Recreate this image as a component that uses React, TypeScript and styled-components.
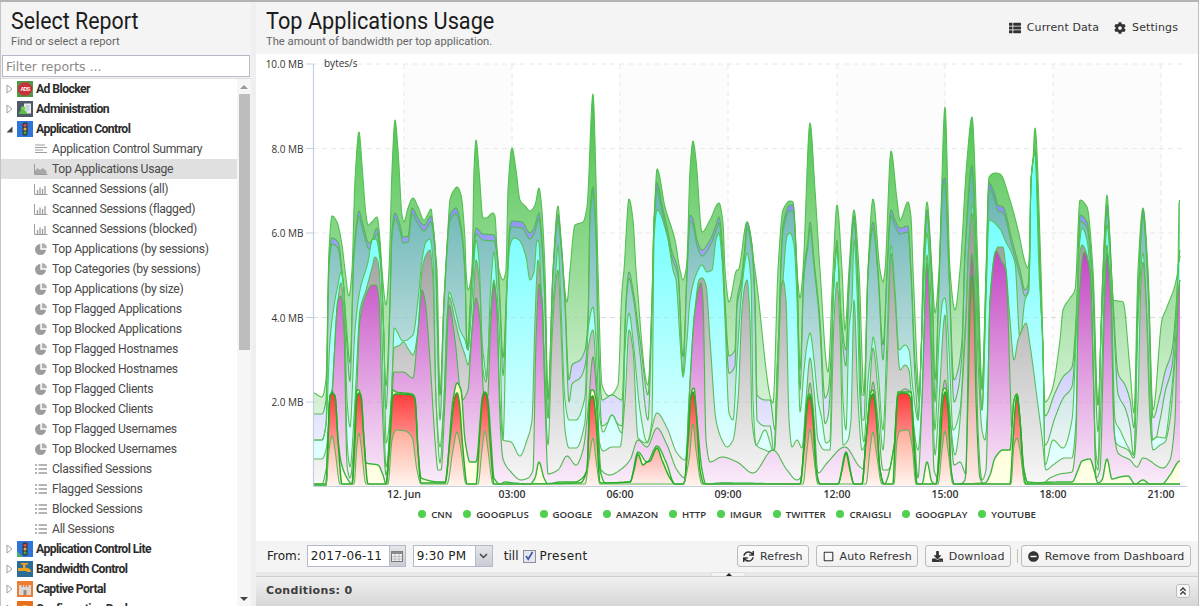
import React from "react";
import styled, { createGlobalStyle } from "styled-components";
import { FaThList, FaCog, FaSync, FaRegSquare, FaDownload, FaMinusCircle, FaAngleDoubleUp } from "react-icons/fa";

const Global = createGlobalStyle`
  html, body { margin: 0; padding: 0; height: 100%; overflow: hidden; background: #fff; }
  #root { height: 100%; }
  * { box-sizing: border-box; }
`;

const BASE = 486;
const LISTS: Record<string, string> = {
  A: "313,485 326,485 329,450 332,436 335,450 340,484 354,484 357,445 359,433 361,445 366,484 388,484 392,440 396,430 405,431 412,437 417,470 421,484 447,484 453,450 457,432 461,450 466,484 478,484 482,450 485,431 488,450 493,484 585,484 589,460 593,438 596,460 600,484 683,484 689,460 693,424 696,450 702,484 803,484 807,450 810,429 813,450 818,484 866,484 870,450 873,432 876,450 882,484 894,484 897,440 900,431 908,430 912,445 916,484 938,484 942,450 945,431 948,450 953,484 1011,484 1014,445 1017,438 1020,450 1025,484 1180,484",
  R: "313,485 326,485 328,440 330,396 332,393 335,396 338,440 342,484 352,484 355,440 357,396 359,393 361,396 364,440 368,484 386,484 390,440 393,396 396,394 412,395 415,400 418,450 421,483 445,483 450,440 455,396 457,393 459,400 463,450 467,484 476,484 480,430 483,396 485,393 487,396 490,440 494,484 503,484 580,483 587,470 590,400 593,396 596,420 600,483 630,482 634,470 638,454 643,465 647,462 650,461 657,448 662,460 670,478 675,484 684,484 688,440 691,396 693,392 696,410 700,470 704,484 800,484 804,450 808,400 810,396 813,420 816,470 820,484 838,484 842,470 846,453 850,470 854,484 862,484 866,440 871,397 873,394 876,415 880,470 884,484 893,484 895,440 898,395 902,393 908,394 911,400 914,450 917,484 936,484 940,450 943,400 945,392 948,410 951,470 954,484 1010,484 1013,440 1016,400 1017,396 1020,420 1023,470 1026,484 1180,484",
  Y: "313,484 326,484 332,391 338,440 341,462 347,478 352,484 357,390 359,390 361,400 366,463 378,465 383,475 386,484 393,390 396,392 412,394 415,398 418,450 421,478 440,482 445,482 453,400 457,383 461,390 465,440 470,462 476,462 483,394 485,392 488,400 491,440 494,478 500,484 505,482 513,483 530,484 535,478 539,462 544,478 548,484 560,482 575,482 580,480 587,470 591,390 593,390 596,400 600,470 606,484 630,482 638,452 647,462 657,446 666,462 675,484 684,484 689,430 692,390 694,388 697,420 702,470 706,484 722,483 800,484 808,396 810,394 813,410 816,470 820,484 838,484 846,452 854,484 862,484 871,392 873,390 876,410 880,470 884,484 895,440 898,392 911,392 914,440 917,484 922,484 927,462 932,482 936,484 943,390 945,388 948,400 951,470 954,484 985,483 990,475 995,458 1003,450 1010,450 1014,400 1017,394 1020,420 1024,470 1028,483 1060,482 1072,482 1078,470 1082,461 1090,459 1094,470 1098,483 1102,480 1107,459 1112,479 1120,477 1128,476 1135,484 1143,480 1150,484 1162,484 1170,475 1180,461",
  M: "313,484 322,484 326,470 330,440 334,360 338,300 341,296 344,330 347,465 350,478 355,430 360,320 366,295 372,285 376,285 379,300 382,400 386,475 390,440 394,372 403,372 413,378 418,330 422,290 425,300 430,360 435,440 438,470 441,470 445,400 449,305 455,340 462,400 468,390 472,330 476,298 480,320 484,400 487,405 491,320 494,283 497,310 500,420 503,459 511,472 521,480 528,478 533,470 536,340 539,284 542,300 545,400 548,474 558,470 567,456 576,465 583,450 588,410 593,357 597,400 601,470 610,475 620,470 630,460 638,440 647,447 657,428 667,445 677,470 685,478 689,400 695,310 701,283 703,300 706,440 710,462 722,457 737,462 753,473 773,450 787,470 797,480 802,475 806,420 810,383 814,420 818,473 827,463 845,447 860,467 866,470 869,420 873,382 878,420 883,470 887,470 893,462 897,400 900,392 905,389 910,392 914,430 918,478 922,400 927,263 931,350 934,470 938,478 940,420 945,380 950,420 954,465 960,462 966,474 969,300 972,254 975,300 978,430 982,480 986,470 990,300 996,251 1002,262 1006,270 1010,380 1014,480 1030,482 1043,483 1050,478 1060,474 1072,472 1076,440 1078,320 1084,252 1090,270 1094,400 1096,478 1100,470 1105,290 1107,253 1111,300 1114,430 1118,453 1130,460 1137,467 1143,458 1163,468 1170,460 1175,420 1178,300 1180,280",
  G: "313,459 322,459 326,450 331,400 335,360 338,300 341,283 344,310 347,440 350,467 355,400 360,310 366,290 372,268 375,257 378,262 381,300 384,420 386,467 390,430 394,348 400,345 403,342 409,350 413,355 418,330 422,270 426,255 430,250 433,280 436,400 440,463 444,400 447,320 449,297 455,320 460,340 465,355 468,365 472,330 476,260 480,290 483,370 486,382 490,320 494,280 497,320 500,400 503,440 511,442 520,456 527,440 532,420 535,320 538,260 541,290 545,390 548,445 552,340 556,280 558,270 561,330 565,430 569,448 576,448 585,422 588,350 593,330 596,370 599,440 603,451 612,447 620,447 625,400 629,330 633,350 638,438 647,443 657,413 667,428 677,453 685,460 690,400 695,310 699,280 702,278 706,285 710,340 716,420 722,440 727,447 733,440 738,400 742,310 745,285 747,280 750,320 752,420 756,445 765,450 774,453 778,380 781,290 783,280 786,300 789,420 792,447 797,440 802,448 806,400 810,358 814,390 818,440 825,450 830,450 834,320 837,282 840,330 843,445 848,440 851,420 854,300 858,400 862,450 866,440 869,400 873,348 878,390 883,450 887,370 891,253 895,300 900,370 905,365 909,370 913,420 918,450 922,400 927,255 931,330 935,455 939,400 945,315 949,400 955,455 958,440 965,340 969,240 972,213 975,260 978,360 982,430 985,440 988,400 990,300 995,255 998,247 1003,247 1006,270 1010,320 1014,360 1018,340 1022,330 1026,323 1030,345 1036,390 1042,437 1046,470 1053,465 1065,458 1072,458 1076,420 1079,260 1082,245 1087,255 1091,330 1095,460 1098,470 1101,400 1104,300 1107,245 1111,340 1115,440 1118,445 1128,450 1134,458 1138,400 1141,280 1143,262 1146,300 1150,420 1153,450 1160,445 1165,442 1170,420 1175,360 1180,300",
  C: "313,440 322,440 326,425 330,340 335,300 338,285 341,272 344,290 347,400 350,427 355,330 360,290 368,262 372,240 376,239 380,260 384,340 386,443 392,390 394,328 403,341 413,335 418,300 422,260 426,242 430,239 433,260 436,400 440,447 444,400 447,330 449,292 455,310 460,330 465,340 468,350 472,300 476,240 479,260 482,340 484,360 487,380 490,300 494,252 497,290 500,350 503,440 507,290 510,245 514,238 519,240 526,257 530,280 534,272 537,240 539,243 541,290 544,350 548,418 552,320 556,270 558,245 560,280 565,400 569,420 576,420 585,397 588,330 593,307 596,340 599,410 603,432 612,415 622,433 625,350 629,313 633,340 640,410 647,442 652,420 654,240 657,210 667,235 673,270 676,280 680,340 683,377 687,340 690,300 696,275 702,265 707,272 712,270 716,240 719,233 722,260 725,320 729,413 733,420 737,360 741,300 745,262 747,253 751,280 753,400 756,445 765,430 774,452 778,350 783,280 787,236 790,233 794,245 797,300 800,412 804,370 807,345 810,333 814,360 818,400 822,420 826,443 830,440 833,300 837,250 840,300 843,400 846,430 849,330 852,300 854,240 857,290 860,400 864,442 868,380 872,345 873,337 878,370 883,430 887,340 891,245 895,290 899,350 905,345 909,350 913,390 918,420 922,330 927,233 931,300 935,430 939,340 943,300 945,298 949,350 953,430 960,410 965,330 969,280 972,203 975,240 978,330 982,410 986,300 989,220 1000,229 1005,240 1015,263 1020,340 1025,300 1029,290 1031,180 1035,153 1039,270 1043,350 1045,465 1053,440 1063,448 1072,420 1076,340 1079,250 1082,228 1087,240 1091,290 1095,440 1098,465 1101,330 1103,300 1107,225 1111,280 1115,420 1120,430 1127,445 1134,455 1138,320 1143,253 1147,320 1152,440 1157,437 1165,438 1170,405 1175,350 1179,260",
  P: "313,414 322,414 326,400 329,260 332,238 338,242 342,270 346,320 350,363 354,250 359,211 363,225 369,243 372,240 377,228 381,260 386,386 390,300 392,230 395,213 400,225 403,237 408,236 412,208 418,218 424,225 431,216 435,245 440,395 444,300 450,215 456,208 461,225 465,270 467,348 472,270 476,228 483,234 494,235 497,250 500,300 503,358 507,280 510,225 512,221 522,222 530,233 534,228 539,213 542,240 545,300 548,400 553,270 558,215 561,240 565,300 569,380 572,365 580,360 585,350 588,320 590,210 593,187 596,230 598,330 602,400 612,395 622,400 626,300 629,272 633,290 640,340 648,395 652,300 654,220 657,183 662,205 668,232 672,252 678,270 683,357 687,270 690,215 693,219 697,240 702,250 710,240 716,225 719,217 722,240 725,300 729,356 735,350 737,300 741,280 745,245 747,222 752,245 755,300 757,395 765,400 770,400 775,430 778,350 783,225 790,205 793,205 797,270 800,370 804,270 808,240 810,222 814,260 820,320 825,398 828,392 832,340 835,260 837,240 840,300 846,350 849,280 854,216 858,280 862,395 864,395 868,270 872,225 873,222 878,270 883,345 887,270 890,215 891,210 895,220 900,228 908,226 911,270 915,360 920,405 923,280 927,210 932,280 935,380 939,280 943,180 945,178 949,270 954,380 958,370 962,340 965,250 972,165 977,270 982,390 986,280 989,183 995,195 998,205 1003,207 1012,240 1020,270 1025,290 1028,285 1032,200 1035,150 1040,270 1045,416 1055,393 1063,377 1072,367 1077,300 1080,215 1087,222 1092,270 1098,405 1103,270 1107,205 1113,300 1118,373 1125,385 1130,400 1134,428 1138,300 1143,210 1148,280 1153,418 1160,395 1165,372 1172,350 1178,280 1180,250",
  W: "313,393 322,397 326,380 329,250 332,216 337,222 342,245 345,270 349,296 352,270 355,180 359,132 362,165 366,215 368,225 372,222 377,217 380,240 382,270 386,305 389,270 392,170 395,120 398,150 402,215 404,222 408,208 413,198 418,207 424,220 428,214 431,209 434,240 437,270 440,395 444,300 446,270 450,200 454,190 457,187 461,195 465,240 466,270 468,290 472,270 474,170 476,140 479,170 483,218 486,218 493,213 495,216 497,250 499,270 503,280 506,270 508,190 512,148 516,170 520,200 526,207 530,211 535,205 539,188 541,200 545,270 548,398 553,270 558,206 560,225 563,270 567,302 570,270 575,225 583,222 587,207 593,94 596,180 598,270 602,385 609,396 618,385 622,290 624,270 629,199 633,220 636,270 648,385 653,270 655,200 657,169 665,207 675,240 680,270 683,280 686,270 687,260 690,170 693,141 696,160 702,232 710,220 719,203 723,223 725,270 729,302 737,270 738,270 747,222 755,270 773,403 778,270 783,210 790,201 793,202 797,270 800,298 803,270 810,123 815,190 820,270 828,372 833,270 837,205 842,270 845,330 849,270 854,210 859,270 864,393 868,270 873,199 880,270 883,282 885,270 891,151 897,200 900,220 908,202 911,217 913,270 920,400 923,270 927,202 932,270 935,313 939,270 945,107 950,270 955,310 960,270 967,160 972,117 978,270 982,385 986,270 989,177 995,173 1000,174 1010,200 1018,230 1026,265 1028,268 1031,220 1035,128 1041,270 1045,402 1052,390 1060,340 1063,310 1070,298 1075,290 1080,200 1087,207 1093,270 1098,405 1103,270 1107,195 1113,300 1123,302 1130,370 1134,413 1138,270 1143,208 1148,270 1153,410 1162,320 1167,307 1178,270 1179,203 1180,200",
  Z: "960,484 965,480 968,400 970,310 972,275 974,310 976,400 980,478 984,484",
};

function interpolator(src: string) {
  const pts = src.split(" ").map((p) => p.split(",").map(Number));
  const n = pts.length;
  const m = pts.map((_, i) => {
    if (i === 0 || i === n - 1) return 0;
    const d0 = (pts[i][1] - pts[i - 1][1]) / (pts[i][0] - pts[i - 1][0]);
    const d1 = (pts[i + 1][1] - pts[i][1]) / (pts[i + 1][0] - pts[i][0]);
    if (d0 * d1 <= 0) return 0;
    return (2 * d0 * d1) / (d0 + d1);
  });
  return (x: number) => {
    if (x <= pts[0][0]) return pts[0][1];
    if (x >= pts[n - 1][0]) return pts[n - 1][1];
    let i = 0;
    while (pts[i + 1][0] < x) i++;
    const h = pts[i + 1][0] - pts[i][0];
    const t = (x - pts[i][0]) / h;
    const t2 = t * t;
    const t3 = t2 * t;
    return (
      (2 * t3 - 3 * t2 + 1) * pts[i][1] +
      (t3 - 2 * t2 + t) * h * m[i] +
      (-2 * t3 + 3 * t2) * pts[i + 1][1] +
      (t3 - t2) * h * m[i + 1]
    );
  };
}

function buildLayers() {
  const keys = ["A", "R", "Y", "M", "G", "C", "P", "W", "Z"];
  const f: Record<string, (x: number) => number> = {};
  keys.forEach((k) => (f[k] = interpolator(LISTS[k])));
  const out: Record<string, [number, number][]> = { A: [], R: [], Y: [], M: [], G: [], C: [], T: [], P: [], W: [] };
  for (let x = 313; x <= 1180; x += 0.5) {
    const a = f.A(x);
    const r = Math.min(f.R(x), a);
    const y = Math.min(f.Y(x), r);
    const m = Math.min(f.M(x), y);
    const g = Math.min(f.G(x), m);
    const c = Math.min(f.C(x), g);
    const rawP = f.P(x);
    const t = Math.min(rawP + 6 + Math.max(0, rawP - 300) * 0.2, c);
    const p = Math.min(rawP, t);
    const w = Math.min(f.W(x), p);
    const vals: Record<string, number> = { A: a, R: r, Y: y, M: m, G: g, C: c, T: t, P: p, W: w };
    Object.keys(vals).forEach((k) => out[k].push([x, vals[k]]));
  }
  return out;
}

const layers = buildLayers();
const linePath = (pts: [number, number][]) => pts.map((p, i) => `${i ? "L" : "M"}${p[0]} ${p[1].toFixed(1)}`).join("");
const areaPath = (pts: [number, number][]) => `${linePath(pts)}L1180 ${BASE}L313 ${BASE}Z`;
const zPts: [number, number][] = [];
{
  const fz = interpolator(LISTS.Z);
  for (let x = 960; x <= 984; x += 0.5) zPts.push([x, fz(x)]);
}

const PAINT = [
  { k: "W", top: 94, c0: "rgb(72,192,72)", c1: "rgb(250,254,250)", lw: 1.1, lc: "#52c052" },
  { k: "P", top: 180, c0: "rgb(132,132,250)", c1: "rgb(255,255,255)", lw: 1.1, lc: "#52b852" },
  { k: "T", top: 190, c0: "rgb(105,180,180)", c1: "rgb(255,255,255)", lw: 1.1, lc: "#52bc52" },
  { k: "C", top: 200, c0: "rgb(110,255,255)", c1: "rgb(240,255,255)", lw: 1.1, lc: "#55c455" },
  { k: "G", top: 240, c0: "rgb(158,158,158)", c1: "rgb(248,248,248)", lw: 1.1, lc: "#5cbc5c" },
  { k: "M", top: 250, c0: "rgb(195,70,195)", c1: "rgb(250,238,250)", lw: 1.1, lc: "#4cb84c" },
  { k: "Y", top: 380, c0: "rgb(255,255,195)", c1: "rgb(255,255,232)", lw: 1.4, lc: "#35b435" },
  { k: "R", top: 392, c0: "rgb(255,55,55)", c1: "rgb(255,242,236)", lw: 1.5, lc: "#25ac25" },
  { k: "A", top: 425, c0: "rgb(255,165,145)", c1: "rgb(255,244,238)", lw: 1.1, lc: "#5cb85c" },
];

const Page = styled.div`
  height: 100vh;
  display: flex;
  background: #f0f0f0;
  border-top: 2px solid #b4b4b4;
  border-right: 1px solid #bcbcbc;
  font-family: "Roboto", sans-serif;
  overflow: hidden;
`;
const Sidebar = styled.aside`
  width: 251px;
  flex: none;
  display: flex;
  flex-direction: column;
  border-left: 1px solid #c4c4c4;
  background: #f4f4f4;
`;
const PanelHead = styled.header`
  height: 52px;
  flex: none;
  padding: 5px 0 0 10px;
  background: #f4f4f4;
`;
const HeadTitle = styled.h1`
  margin: 0;
  font: 400 24px/28px "Roboto", sans-serif;
  color: #1c1c1c;
  display: inline-block;
  transform: scaleX(0.89);
  transform-origin: left center;
  white-space: nowrap;
`;
const HeadSub = styled.div`
  font: 400 11.2px/14px "Roboto", sans-serif;
  color: #666;
  white-space: nowrap;
`;
const Filter = styled.input`
  display: block;
  flex: none;
  height: 22px;
  margin: 1px 1px 1px 1px;
  width: 248px;
  padding: 0 3px;
  border: 1px solid #b5b8c8;
  background: #fff;
  font: 400 12.5px "DejaVu Sans", sans-serif;
  color: #444;
  outline: none;
  &::placeholder { color: #8a8a8a; opacity: 1; }
`;
const TreeWrap = styled.div`
  flex: 1;
  min-height: 0;
  display: flex;
  background: #fff;
  border-top: 1px solid #ddd;
`;
const Tree = styled.ul`
  flex: 1;
  margin: 0;
  padding: 0;
  list-style: none;
  overflow: hidden;
`;
const Row = styled.li<{ $selected?: boolean; $cat?: boolean }>`
  height: 20px;
  display: flex;
  align-items: center;
  padding-left: ${(p) => (p.$cat ? 5 : 33)}px;
  background: ${(p) => (p.$selected ? "#e0e0e0" : "transparent")};
  font: ${(p) => (p.$cat ? 700 : 400)} 12.2px "Roboto", sans-serif;
  letter-spacing: ${(p) => (p.$cat ? -0.58 : -0.32)}px;
  color: ${(p) => (p.$cat ? "#2c2c2c" : "#4a4a4a")};
  white-space: nowrap;
`;
const Expander = styled.svg`
  width: 7px;
  height: 10px;
  flex: none;
  margin-right: 4px;
`;
const CatIcon = styled.svg`
  width: 16px;
  height: 16px;
  flex: none;
  margin-right: 3px;
`;
const ItemIcon = styled.svg`
  width: 14px;
  height: 14px;
  flex: none;
  margin-right: 4px;
`;
const ScrollBar = styled.div`
  width: 14px;
  flex: none;
  display: flex;
  flex-direction: column;
  align-items: center;
  background: #f6f6f6;
`;
const ScrollArrow = styled.div<{ $up?: boolean }>`
  flex: none;
  width: 0;
  height: 0;
  margin: ${(p) => (p.$up ? "6px 0 5px" : "auto 0 5px")};
  border-left: 4px solid transparent;
  border-right: 4px solid transparent;
  ${(p) => (p.$up ? "border-bottom: 4px solid #9a9a9a;" : "border-top: 4px solid #444;")}
`;
const ScrollThumb = styled.div`
  width: 11px;
  height: 256px;
  flex: none;
  background: #bdbdbd;
`;
const Gutter = styled.div`
  width: 5px;
  flex: none;
  background: #efefef;
`;
const Main = styled.main`
  flex: 1;
  min-width: 0;
  display: flex;
  flex-direction: column;
`;
const MainHead = styled(PanelHead)`
  display: flex;
  justify-content: space-between;
  padding-left: 10px;
  padding-right: 20px;
  flex: none;
`;
const HeadLinks = styled.div`
  display: flex;
  gap: 15px;
  padding-top: 14px;
`;
const HeadLink = styled.span`
  display: inline-flex;
  align-items: center;
  height: 13px;
  gap: 6px;
  font: 400 11px "DejaVu Sans", sans-serif;
  letter-spacing: 0.1px;
  color: #333;
  svg { color: #333; font-size: 12px; }
`;
const ChartPane = styled.section`
  flex: 1;
  min-height: 0;
  background: #fff;
`;
const ChartSvg = styled.svg`
  display: block;
  width: 942px;
  height: 451px;
`;
const AxisText = styled.text`
  font: 400 10px "Open Sans", sans-serif;
  fill: #333;
`;
const XText = styled(AxisText)`
  font-weight: 600;
  font-size: 10.5px;
  text-anchor: middle;
`;
const Legend = styled.div`
  display: flex;
  justify-content: center;
  align-items: center;
  height: 18px;
  gap: 10.9px;
`;
const LegendItem = styled.span`
  display: inline-flex;
  align-items: center;
  gap: 5px;
  font: 600 9.6px "Open Sans", sans-serif;
  color: #333;
`;
const Dot = styled.i`
  width: 8px;
  height: 8px;
  border-radius: 50%;
  background: #4fd04f;
`;
const Toolbar = styled.div`
  height: 31px;
  flex: none;
  display: flex;
  align-items: center;
  padding: 0 7px 1px 11px;
  background: #f4f4f4;
  font: 400 12px "DejaVu Sans", sans-serif;
  color: #222;
`;
const Field = styled.div<{ $w: number; $ml: number }>`
  width: ${(p) => p.$w}px;
  margin-left: ${(p) => p.$ml}px;
  height: 22px;
  display: flex;
  border: 1px solid #b5b8c8;
  background: #fff;
  align-items: center;
  padding-left: 3px;
  position: relative;
  font-size: 12px;
  letter-spacing: 0.15px;
`;
const Trigger = styled.div<{ $w: number }>`
  margin-left: auto;
  width: ${(p) => p.$w}px;
  height: 20px;
  flex: none;
  display: flex;
  align-items: center;
  justify-content: center;
  background: linear-gradient(#e4e6ea, #c8ccd4);
  border-left: 1px solid #b5b8c8;
`;
const Till = styled.span`
  margin-left: 11px;
`;
const Check = styled.span`
  width: 13px;
  height: 13px;
  margin: 0 4px;
  border: 1px solid #8a8f9c;
  background: #e4e6ee;
  display: inline-flex;
  align-items: center;
  justify-content: center;
`;
const PresentLabel = styled.span`
  letter-spacing: 0.45px;
`;
const Spacer = styled.div`
  flex: 1;
`;
const Button = styled.button<{ $ml?: number }>`
  height: 22px;
  margin-left: ${(p) => p.$ml ?? 7}px;
  padding: 0 5.5px;
  display: inline-flex;
  align-items: center;
  gap: 6px;
  border: 1px solid #bcbcbc;
  border-radius: 3px;
  background: linear-gradient(#fbfbfb, #f1f1f1);
  font: 400 11px "DejaVu Sans", sans-serif;
  letter-spacing: 0.14px;
  color: #333;
  svg { font-size: 11px; color: #333; }
`;
const Sep = styled.i`
  width: 1px;
  height: 14px;
  margin-left: 6px;
  background: #c8c0a8;
`;
const Splitter = styled.div`
  height: 5px;
  flex: none;
  background: #e8e8e8;
  position: relative;
  border-bottom: 1px solid #d0d0d0;
`;
const SplitTab = styled.div`
  position: absolute;
  left: 455px;
  top: 0;
  width: 35px;
  height: 4px;
  background: #f4f4f4;
  border-top-left-radius: 3px;
  border-top-right-radius: 3px;
  border: 1px solid #ddd;
  border-bottom: none;
  display: flex;
  justify-content: center;
  &::after {
    content: "";
    width: 0;
    height: 0;
    border-left: 3px solid transparent;
    border-right: 3px solid transparent;
    border-bottom: 3px solid #222;
  }
`;
const Conditions = styled.div`
  height: 29px;
  flex: none;
  display: flex;
  align-items: center;
  justify-content: space-between;
  padding: 0 8px 2px 10px;
  background: linear-gradient(#f0f0f0, #d6d6d6);
  font: 700 11px "DejaVu Sans", sans-serif;
  letter-spacing: 0.35px;
  color: #3c3c3c;
`;
const CollapseBtn = styled.span`
  width: 14px;
  height: 14px;
  display: flex;
  align-items: center;
  justify-content: center;
  border: 1px solid #bcbcbc;
  border-radius: 3px;
  background: #f7f7f7;
  font-size: 10px;
  color: #444;
`;
const Title2 = styled(HeadTitle)`
  transform: scaleX(0.905);
`;

const AppIcon = ({ type }: { type: string }) => {
  if (type === "ads")
    return (
      <CatIcon viewBox="0 0 16 16">
        <rect width="16" height="16" fill="#4f9a4a" />
        <polygon points="5,1.5 11,1.5 15,5.5 15,10.5 11,14.5 5,14.5 1,10.5 1,5.5" fill="#c8303a" />
        <text x="8" y="10" textAnchor="middle" fontSize="5.2" fontWeight="700" fill="#fff" fontFamily="Liberation Sans">ADS</text>
      </CatIcon>
    );
  if (type === "admin")
    return (
      <CatIcon viewBox="0 0 16 16">
        <rect width="16" height="16" fill="#4f5a68" />
        <rect x="7" y="2.5" width="7" height="10" fill="#e8eef0" />
        <path d="M8.5 5h4M8.5 7h4M8.5 9h4" stroke="#9aa" strokeWidth=".8" />
        <circle cx="6" cy="7.5" r="2.2" fill="#6fcf4f" />
        <path d="M2 13c0-3 2-4 4-4s4 1 4 4z" fill="#5fbf45" />
      </CatIcon>
    );
  if (type === "app" || type === "lite")
    return (
      <CatIcon viewBox="0 0 16 16">
        <rect width="16" height="16" fill="#2f74d8" />
        <rect x="5.5" y="1.5" width="5" height="13" rx="1.5" fill="#3a3a3a" />
        <circle cx="8" cy="4.2" r="1.5" fill="#e84a3a" />
        <circle cx="8" cy="8" r="1.5" fill="#e8b53a" />
        <circle cx="8" cy="11.8" r="1.5" fill="#3fae4a" />
        {type === "lite" && <polygon points="0,10 6,16 0,16" fill="#48b070" />}
      </CatIcon>
    );
  if (type === "bw")
    return (
      <CatIcon viewBox="0 0 16 16">
        <rect width="16" height="16" fill="#2a6d96" />
        <path d="M1 7h8c3 0 5 1 5 4H10c0-1-1-1-2-1H1z" fill="#f0a020" />
        <rect x="6" y="3" width="2.5" height="4" fill="#f0a020" />
        <rect x="4" y="2" width="7" height="1.6" fill="#f0a020" />
      </CatIcon>
    );
  if (type === "captive")
    return (
      <CatIcon viewBox="0 0 16 16">
        <rect width="16" height="16" fill="#ee7d33" />
        <path d="M2 4h2.5v2H6V4h1.2v2h1.6V4H10v2h1.5V4H14v10H2z" fill="#d8d8d8" />
        <rect x="6.5" y="9" width="3" height="5" fill="#a08878" />
      </CatIcon>
    );
  return (
    <CatIcon viewBox="0 0 16 16">
      <rect width="16" height="16" fill="#e8701a" />
      <circle cx="8" cy="8" r="4" fill="#f8c050" />
    </CatIcon>
  );
};

const LeafIcon = ({ type }: { type: string }) => {
  const stroke = "#9c9c9c";
  if (type === "text")
    return (
      <ItemIcon viewBox="0 0 14 14">
        <path d="M1 3h10M1 5.5h12M1 8h8M1 10.5h12" stroke={stroke} strokeWidth="1.2" />
      </ItemIcon>
    );
  if (type === "area")
    return (
      <ItemIcon viewBox="0 0 14 14">
        <path d="M1 12V9l2.5-3 2.5 2 3-2 3.5 3v3z" fill="#a8a8a8" />
        <path d="M.5 2v10.5h13" fill="none" stroke={stroke} />
      </ItemIcon>
    );
  if (type === "bar")
    return (
      <ItemIcon viewBox="0 0 14 14">
        <path d="M.5 2v10.5h13" fill="none" stroke={stroke} />
        <path d="M3.5 12V8M6 12V5.5M8.5 12V7M11 12V4" stroke={stroke} strokeWidth="1.3" />
      </ItemIcon>
    );
  if (type === "pie")
    return (
      <ItemIcon viewBox="0 0 14 14">
        <path d="M6.3 2A5.5 5.5 0 1 0 12 7.7H6.3z" fill="#9c9c9c" />
        <path d="M7.8 1a5.2 5.2 0 0 1 5.2 5.2H7.8z" fill="#b0b0b0" />
      </ItemIcon>
    );
  return (
    <ItemIcon viewBox="0 0 14 14">
      <path d="M1 3h2M1 7h2M1 11h2M4.5 3H13M4.5 7H13M4.5 11H13" stroke={stroke} strokeWidth="1.5" />
    </ItemIcon>
  );
};

const Collapsed = () => (
  <Expander viewBox="0 0 7 10">
    <polygon points="1,1 6,5 1,9" fill="#fff" stroke="#a0a0a0" />
  </Expander>
);
const Opened = () => (
  <Expander viewBox="0 0 7 10">
    <polygon points="0.5,8.5 6.5,8.5 6.5,2.5" fill="#444" />
  </Expander>
);

const ITEMS: [string, string][] = [
  ["Application Control Summary", "text"],
  ["Top Applications Usage", "area"],
  ["Scanned Sessions (all)", "bar"],
  ["Scanned Sessions (flagged)", "bar"],
  ["Scanned Sessions (blocked)", "bar"],
  ["Top Applications (by sessions)", "pie"],
  ["Top Categories (by sessions)", "pie"],
  ["Top Applications (by size)", "pie"],
  ["Top Flagged Applications", "pie"],
  ["Top Blocked Applications", "pie"],
  ["Top Flagged Hostnames", "pie"],
  ["Top Blocked Hostnames", "pie"],
  ["Top Flagged Clients", "pie"],
  ["Top Blocked Clients", "pie"],
  ["Top Flagged Usernames", "pie"],
  ["Top Blocked Usernames", "pie"],
  ["Classified Sessions", "list"],
  ["Flagged Sessions", "list"],
  ["Blocked Sessions", "list"],
  ["All Sessions", "list"],
];
const LEGEND = ["CNN", "GOOGPLUS", "GOOGLE", "AMAZON", "HTTP", "IMGUR", "TWITTER", "CRAIGSLI", "GOOGPLAY", "YOUTUBE"];
const YTICKS: [string, number][] = [["10.0 MB", 64], ["8.0 MB", 148.5], ["6.0 MB", 233], ["4.0 MB", 317.5], ["2.0 MB", 402]];
const XTICKS: [string, number][] = [["12. Jun", 404], ["03:00", 512], ["06:00", 620], ["09:00", 728], ["12:00", 837], ["15:00", 945], ["18:00", 1053], ["21:00", 1161]];
const BANDS: [number, number][] = [[404, 512], [620, 728], [837, 945], [1053, 1161]];

const Chart = () => (
  <ChartSvg viewBox="256 54 942 451">
    <defs>
      {PAINT.map((p) => (
        <linearGradient key={p.k} id={`g${p.k}`} gradientUnits="userSpaceOnUse" x1="0" x2="0" y1={p.top} y2={BASE}>
          <stop offset="0" stopColor={p.c0} />
          <stop offset="1" stopColor={p.c1} />
        </linearGradient>
      ))}
      <linearGradient id="gZ" gradientUnits="userSpaceOnUse" x1="0" x2="0" y1="275" y2={BASE}>
        <stop offset="0" stopColor="rgb(205,105,100)" />
        <stop offset="1" stopColor="rgb(255,238,232)" />
      </linearGradient>
    </defs>
    {BANDS.map(([a, b]) => (
      <rect key={a} x={a} y={64} width={b - a} height={422} fill="#fcfcfc" />
    ))}
    {YTICKS.map(([t, y]) => (
      <g key={t}>
        <line x1="313" x2="1186" y1={y} y2={y} stroke="#e8e8e8" strokeDasharray="5 4" />
        <line x1="306" x2="313" y1={y} y2={y} stroke="#c0d0e0" />
        <AxisText x="303.5" y={y + 4} textAnchor="end">{t}</AxisText>
      </g>
    ))}
    {XTICKS.map(([t, x]) => (
      <line key={t} x1={x} x2={x} y1="64" y2="486" stroke="#e8e8e8" strokeDasharray="5 4" />
    ))}
    {PAINT.map((p) => (
      <path key={p.k} d={areaPath(layers[p.k])} fill={`url(#g${p.k})`} />
    ))}
    <path d={`${linePath(zPts)}L984 ${BASE}L960 ${BASE}Z`} fill="url(#gZ)" />
    {PAINT.map((p) => (
      <path key={p.k} d={linePath(layers[p.k])} fill="none" stroke={p.lc} strokeWidth={p.lw} strokeLinejoin="round" />
    ))}
    <g opacity="0.14">
      <line x1="313" x2="1186" y1="402" y2="402" stroke="#888" strokeDasharray="5 4" />
      <line x1="313" x2="1186" y1="317.5" y2="317.5" stroke="#888" strokeDasharray="5 4" />
    </g>
    <path d={linePath(zPts)} fill="none" stroke="#3cae3c" strokeWidth="1.2" />
    <line x1="313.5" x2="313.5" y1="64" y2="486" stroke="#c0d0e0" strokeWidth="1.2" />
    <line x1="313" x2="1187" y1="486.5" y2="486.5" stroke="#c0d0e0" strokeWidth="1.2" />
    <AxisText x="324" y="67">bytes/s</AxisText>
    {XTICKS.map(([t, x]) => (
      <XText key={t} x={x} y="498">{t}</XText>
    ))}
  </ChartSvg>
);

export default function App() {
  return (
    <>
      <Global />
      <Page>
        <Sidebar>
          <PanelHead>
            <HeadTitle>Select Report</HeadTitle>
            <HeadSub>Find or select a report</HeadSub>
          </PanelHead>
          <Filter placeholder="Filter reports ..." />
          <TreeWrap>
            <Tree>
              <Row $cat><Collapsed /><AppIcon type="ads" />Ad Blocker</Row>
              <Row $cat><Collapsed /><AppIcon type="admin" />Administration</Row>
              <Row $cat><Opened /><AppIcon type="app" />Application Control</Row>
              {ITEMS.map(([label, type]) => (
                <Row key={label} $selected={label === "Top Applications Usage"}>
                  <LeafIcon type={type} />
                  {label}
                </Row>
              ))}
              <Row $cat><Collapsed /><AppIcon type="lite" />Application Control Lite</Row>
              <Row $cat><Collapsed /><AppIcon type="bw" />Bandwidth Control</Row>
              <Row $cat><Collapsed /><AppIcon type="captive" />Captive Portal</Row>
              <Row $cat><Collapsed /><AppIcon type="config" />Configuration Backup</Row>
            </Tree>
            <ScrollBar>
              <ScrollArrow $up />
              <ScrollThumb />
              <ScrollArrow />
            </ScrollBar>
          </TreeWrap>
        </Sidebar>
        <Gutter />
        <Main>
          <MainHead>
            <div>
              <Title2>Top Applications Usage</Title2>
              <HeadSub>The amount of bandwidth per top application.</HeadSub>
            </div>
            <HeadLinks>
              <HeadLink><FaThList />Current Data</HeadLink>
              <HeadLink><FaCog />Settings</HeadLink>
            </HeadLinks>
          </MainHead>
          <ChartPane>
            <Chart />
            <Legend>
              {LEGEND.map((l) => (
                <LegendItem key={l}><Dot />{l}</LegendItem>
              ))}
            </Legend>
          </ChartPane>
          <Toolbar>
            <span>From:</span>
            <Field $w={99} $ml={6}>
              2017-06-11
              <Trigger $w={16}>
                <svg width="12" height="12" viewBox="0 0 12 12">
                  <rect x="0.5" y="1.5" width="11" height="10" fill="#f2f2f2" stroke="#777" />
                  <rect x="0.5" y="1.5" width="11" height="2.5" fill="#8c8c8c" />
                  <path d="M1 6.5h10M1 9h10M4 4v7M8 4v7" stroke="#aaa" strokeWidth=".7" />
                </svg>
              </Trigger>
            </Field>
            <Field $w={80} $ml={7}>
              9:30 PM
              <Trigger $w={17}>
                <svg width="9" height="6" viewBox="0 0 9 6"><path d="M1 1l3.5 3.5L8 1" fill="none" stroke="#444" strokeWidth="1.5" /></svg>
              </Trigger>
            </Field>
            <Till>till</Till>
            <Check>
              <svg width="10" height="10" viewBox="0 0 10 10"><path d="M2 5l2.2 3.2L8.5 1" fill="none" stroke="#3a55a8" strokeWidth="1.6" /></svg>
            </Check>
            <PresentLabel>Present</PresentLabel>
            <Spacer />
            <Button><FaSync />Refresh</Button>
            <Button><FaRegSquare />Auto Refresh</Button>
            <Button><FaDownload />Download</Button>
            <Sep />
            <Button $ml={3}><FaMinusCircle />Remove from Dashboard</Button>
          </Toolbar>
          <Splitter><SplitTab /></Splitter>
          <Conditions>
            Conditions: 0
            <CollapseBtn><FaAngleDoubleUp /></CollapseBtn>
          </Conditions>
        </Main>
      </Page>
    </>
  );
}
